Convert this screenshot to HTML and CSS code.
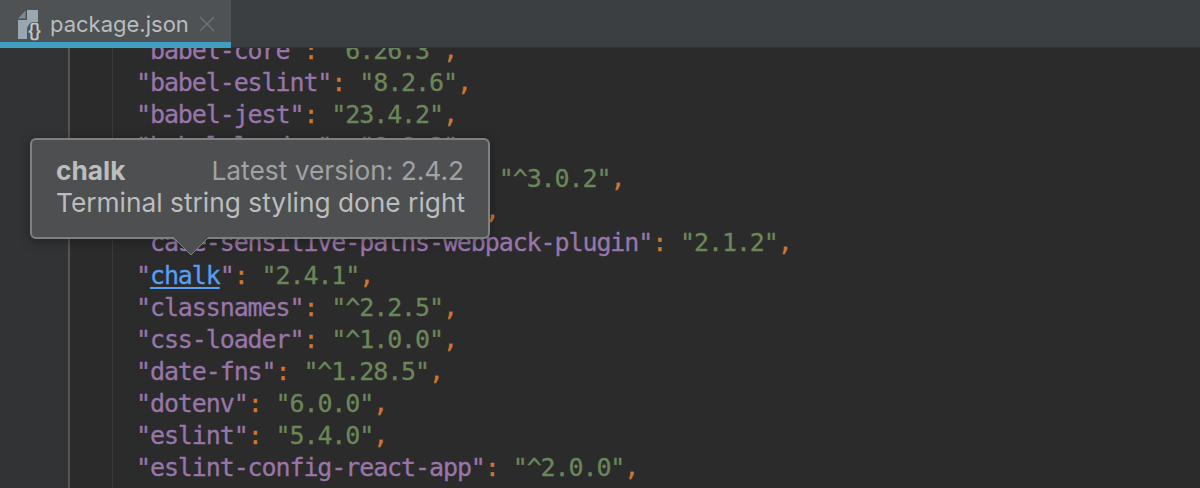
FILE: index.html
```html
<!DOCTYPE html>
<html lang="en">
<head>
<meta charset="utf-8">
<title>package.json</title>
<link rel="stylesheet" href="styles.css">
</head>
<body>
<div class="app">
  <header class="tabbar">
    <div class="tab">
      <svg class="file-icon" width="28" height="32" viewBox="0 0 28 32">
        <path class="file-body" d="M10 1 H21 V13 H15 Q11 15 10 20 V30 H1 V11 H10 Z"/>
        <path class="file-fold" d="M1 9.5 L8.5 1.5 V9.5 Z"/>
        <text class="file-braces" x="17.5" y="27" text-anchor="middle">{}</text>
      </svg>
      <span class="tab-name">package.json</span>
      <svg class="tab-close" width="16" height="16" viewBox="0 0 16 16"><path d="M1 1 L15 15 M15 1 L1 15"/></svg>
    </div>
  </header>
  <main class="editor">
    <div class="gutter"></div>
    <div class="fold-col"></div>
    <pre class="code"><span class="l"><b>"babel-core"</b><i>:</i> <u>"6.26.3"</u><i>,</i></span>
<span class="l"><b>"babel-eslint"</b><i>:</i> <u>"8.2.6"</u><i>,</i></span>
<span class="l"><b>"babel-jest"</b><i>:</i> <u>"23.4.2"</u><i>,</i></span>
<span class="l"><b>"babel-loader"</b><i>:</i> <u>"8.0.2"</u><i>,</i></span>
<span class="l"><b>"babel-preset-react-app"</b><i>:</i> <u>"^3.0.2"</u><i>,</i></span>
<span class="l"><b>"bootstrap"</b><i>:</i> <u>"4.1.3-rc.1"</u><i>,</i></span>
<span class="l"><b class="in">case-sensitive-paths-webpack-plugin"</b><i>:</i> <u>"2.1.2"</u><i>,</i></span>
<span class="l"><b>"<a class="link">chalk</a>"</b><i>:</i> <u>"2.4.1"</u><i>,</i></span>
<span class="l"><b>"classnames"</b><i>:</i> <u>"^2.2.5"</u><i>,</i></span>
<span class="l"><b>"css-loader"</b><i>:</i> <u>"^1.0.0"</u><i>,</i></span>
<span class="l"><b>"date-fns"</b><i>:</i> <u>"^1.28.5"</u><i>,</i></span>
<span class="l"><b>"dotenv"</b><i>:</i> <u>"6.0.0"</u><i>,</i></span>
<span class="l"><b>"eslint"</b><i>:</i> <u>"5.4.0"</u><i>,</i></span>
<span class="l"><b>"eslint-config-react-app"</b><i>:</i> <u>"^2.0.0"</u><i>,</i></span></pre>
  </main>
  <aside class="tooltip">
    <div class="tip-head"><strong>chalk</strong><span>Latest version: 2.4.2</span></div>
    <div class="tip-desc">Terminal string styling done right</div>
    <svg class="tip-arrow" width="36" height="20" viewBox="0 0 36 20"><path class="a-fill" d="M0 0 L18 18 L36 0 Z"/><path class="a-line" d="M0 0 L18 18 L36 0"/></svg>
  </aside>
</div>
</body>
</html>
```
FILE: styles.css
```css
* { box-sizing: border-box; }
html, body { margin: 0; height: 100%; background: #2b2b2b; overflow: hidden; }
.app { position: relative; width: 1200px; height: 488px; display: flex; flex-direction: column; overflow: hidden; }
.tabbar { height: 48px; flex: none; background: #3c3f41; border-bottom: 1px solid #323232; position: relative; z-index: 2; }
.tab { width: 231px; height: 48px; background: #4e5254; border-bottom: 6px solid #3f9fc1; display: flex; align-items: center; padding: 6px 0 0 17px; }
.file-icon { flex: none; margin-top: 2px; }
.file-body { fill: #9aa7b0; }
.file-fold { fill: #8d979d; opacity: .8; }
.file-braces { fill: #c5ccd0; font: 400 18px "Liberation Sans", sans-serif; stroke: #c5ccd0; stroke-width: .4; }
.tab-name { font: 22px "Inter", "Liberation Sans", sans-serif; color: #b9bdbf; margin-left: 5px; }
.tab-close { margin: 0 0 0 10px; fill: none; stroke: #6f7274; stroke-width: 1.4; }
.editor { flex: 1; display: flex; position: relative; min-height: 0; }
.gutter { width: 70px; flex: none; border-right: 2px solid #555; background: #313335; }
.fold-col { width: 43px; flex: none; border-right: 1px solid #3a3a3a; }
.code { margin: -13px 0 0 23px; font: 25px/32.08px "DejaVu Sans Mono", monospace; letter-spacing: -1.1px; color: #a9b7c6; -webkit-text-stroke: .3px; }
.l { display: inline-block; height: 32.08px; }
.l b { font-weight: 400; color: #9876aa; }
.l i { font-style: normal; color: #cc7832; }
.l u { text-decoration: none; color: #6a8759; }
.l .in { margin-left: 13.95px; }
.link { color: #589df6; text-decoration: underline; text-decoration-thickness: 2px; text-underline-offset: 3px; }
.tooltip { position: absolute; left: 30px; top: 138px; width: 460px; height: 101px; background: #4d4f50; border: 2px solid #7e8082; border-radius: 6px; padding: 15px 24px 0 24px; font: 26.3px/32px "Inter", "Liberation Sans", sans-serif; color: #bbbdbe; box-shadow: 0 2px 12px rgba(0,0,0,.35); z-index: 3; white-space: nowrap; }
.tip-head { display: flex; justify-content: space-between; }
.tip-head strong { font-weight: 700; }
.tip-head span { color: #a0a2a3; }
.tip-arrow { position: absolute; left: 141px; top: 97px; }
.a-fill { fill: #4d4f50; }
.a-line { fill: none; stroke: #7e8082; stroke-width: 1; }
```
